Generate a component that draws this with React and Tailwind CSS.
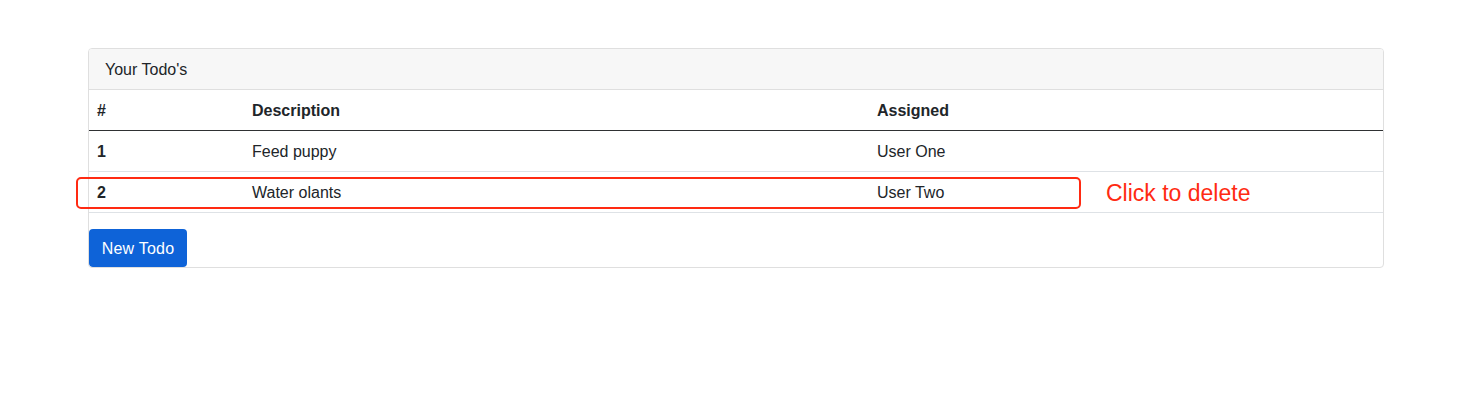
const todos = [
  { id: 1, description: "Feed puppy", assigned: "User One" },
  { id: 2, description: "Water olants", assigned: "User Two" },
];

const App = () => {
  return (
    <div
      className="relative w-[1479px] h-[411px] bg-white text-[#212529] text-[16px] leading-6"
      style={{ fontFamily: '"Liberation Sans", Arial, sans-serif' }}
    >
      <div className="pt-[48px] pl-[88px]">
        <div className="w-[1296px] border border-[#dfdfdf] rounded-[4px] overflow-hidden">
          <div className="bg-[#f7f7f7] border-b border-[#dfdfdf] px-4 pt-[9px] pb-[7px]">
            Your Todo's
          </div>
          <table className="w-full border-collapse text-left">
            <thead>
              <tr className="border-b border-[#2f3133]">
                <th className="w-[155px] px-2 pt-[9px] pb-[7px] font-bold">#</th>
                <th className="w-[625px] px-2 pt-[9px] pb-[7px] font-bold">Description</th>
                <th className="px-2 pt-[9px] pb-[7px] font-bold">Assigned</th>
              </tr>
            </thead>
            <tbody>
              {todos.map((todo) => (
                <tr key={todo.id} className="border-b border-[#dee2e6]">
                  <td className="px-2 pt-[9px] pb-[7px] font-bold">{todo.id}</td>
                  <td className="px-2 pt-[9px] pb-[7px]">{todo.description}</td>
                  <td className="px-2 pt-[9px] pb-[7px]">{todo.assigned}</td>
                </tr>
              ))}
            </tbody>
          </table>
          <button className="mt-4 w-[98px] h-[38px] pt-[2px] bg-[#0e63d8] text-white rounded-[4px] leading-6 tracking-[0.2px]">
            New Todo
          </button>
        </div>
      </div>

      {/* annotation overlay */}
      <div className="absolute left-[76px] top-[177px] w-[1005px] h-[32px] border-2 border-[#ff2a12] rounded-[5px]" />
      <div className="absolute left-[1106px] top-[179px] text-[23px] leading-7 text-[#ff2a12]">
        Click to delete
      </div>
    </div>
  );
};

export default App;
